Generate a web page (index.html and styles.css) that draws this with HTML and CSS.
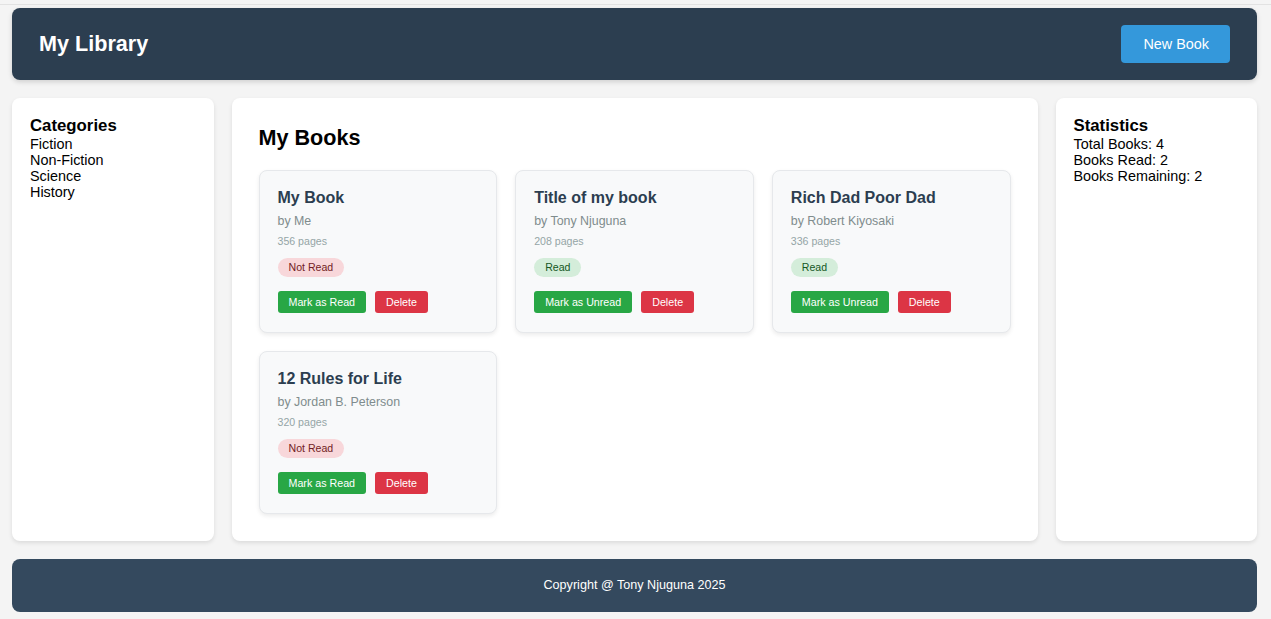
FILE: index.html
```html
<!DOCTYPE html>
<html lang="en">
<head>
<meta charset="utf-8">
<title>My Library</title>
<link rel="stylesheet" href="styles.css">
</head>
<body>
<header class="topbar">
  <h1 class="brand">My Library</h1>
  <button class="btn-new">New Book</button>
</header>
<main class="layout">
  <aside class="panel side">
    <h3 class="side-title">Categories</h3>
    <ul class="plain-list">
      <li>Fiction</li>
      <li>Non-Fiction</li>
      <li>Science</li>
      <li>History</li>
    </ul>
  </aside>
  <section class="panel books">
    <h2 class="books-title">My Books</h2>
    <div class="book-grid">
      <article class="book-card">
        <h4 class="book-title">My Book</h4>
        <p class="book-author">by Me</p>
        <p class="book-pages">356 pages</p>
        <span class="badge badge-unread">Not Read</span>
        <div class="book-actions">
          <button class="btn btn-green">Mark as Read</button>
          <button class="btn btn-red">Delete</button>
        </div>
      </article>
      <article class="book-card">
        <h4 class="book-title">Title of my book</h4>
        <p class="book-author">by Tony Njuguna</p>
        <p class="book-pages">208 pages</p>
        <span class="badge badge-read">Read</span>
        <div class="book-actions">
          <button class="btn btn-green">Mark as Unread</button>
          <button class="btn btn-red">Delete</button>
        </div>
      </article>
      <article class="book-card">
        <h4 class="book-title">Rich Dad Poor Dad</h4>
        <p class="book-author">by Robert Kiyosaki</p>
        <p class="book-pages">336 pages</p>
        <span class="badge badge-read">Read</span>
        <div class="book-actions">
          <button class="btn btn-green">Mark as Unread</button>
          <button class="btn btn-red">Delete</button>
        </div>
      </article>
      <article class="book-card">
        <h4 class="book-title">12 Rules for Life</h4>
        <p class="book-author">by Jordan B. Peterson</p>
        <p class="book-pages">320 pages</p>
        <span class="badge badge-unread">Not Read</span>
        <div class="book-actions">
          <button class="btn btn-green">Mark as Read</button>
          <button class="btn btn-red">Delete</button>
        </div>
      </article>
    </div>
  </section>
  <aside class="panel side">
    <h3 class="side-title">Statistics</h3>
    <ul class="plain-list">
      <li>Total Books: 4</li>
      <li>Books Read: 2</li>
      <li>Books Remaining: 2</li>
    </ul>
  </aside>
</main>
<footer class="footer">Copyright @ Tony Njuguna 2025</footer>
</body>
</html>
```
FILE: styles.css
```css
html {
  background: #f4f4f4;
}
body {
  margin: 4px 0 0;
  border-top: 1px solid #e2e2e2;
  padding: 3px 14px 0 12px;
  font-family: "Liberation Sans", Arial, sans-serif;
  font-size: 14.4px;
  color: #000;
}
.topbar {
  height: 72px;
  box-sizing: border-box;
  background: #2c3e50;
  border-radius: 8px;
  box-shadow: 0 2px 5px rgba(0, 0, 0, 0.15);
  display: flex;
  align-items: center;
  justify-content: space-between;
  padding: 0 27px;
}
.brand {
  margin: 0;
  font-size: 21.6px;
  font-weight: bold;
  color: #fff;
}
.btn-new {
  height: 38px;
  padding: 0 21px 0 22px;
  border: none;
  border-radius: 4px;
  background: #3498db;
  color: #fff;
  font-family: "Liberation Sans", Arial, sans-serif;
  font-size: 14.4px;
}
.layout {
  display: grid;
  grid-template-columns: 1fr 4fr 1fr;
  gap: 18px;
  margin: 18px 0;
}
.panel {
  background: #fff;
  border-radius: 8px;
  box-shadow: 0 2px 4px rgba(0, 0, 0, 0.1);
}
.side {
  padding: 18px;
  height: 443px;
  box-sizing: border-box;
}
.side-title {
  margin: 0;
  font-size: 16.8px;
  line-height: 20px;
}
.plain-list {
  list-style: none;
  margin: 0;
  padding: 0;
  font-size: 14.4px;
  line-height: 16px;
}
.books {
  padding: 27px 27px 27px;
}
.books-title {
  margin: 0 0 20px;
  font-size: 21.6px;
  line-height: 25px;
}
.book-grid {
  display: grid;
  grid-template-columns: repeat(3, 1fr);
  gap: 18px;
}
.book-card {
  background: #f8f9fa;
  border: 1px solid #e6e8eb;
  border-radius: 8px;
  box-shadow: 0 2px 4px rgba(0, 0, 0, 0.08);
  padding: 18px 18px 19px;
  display: flex;
  flex-direction: column;
  align-items: flex-start;
}
.book-title {
  margin: 0 0 7px;
  font-size: 16px;
  line-height: 18px;
  color: #2c3e50;
}
.book-author {
  margin: 0;
  font-size: 12.4px;
  line-height: 15px;
  color: #7f8c8d;
}
.book-pages {
  margin: 6px 0 11px;
  font-size: 10.6px;
  line-height: 12px;
  color: #95a5a6;
}
.badge {
  font-size: 10.6px;
  line-height: 13px;
  padding: 3px 11px;
  border-radius: 10px;
}
.badge-unread {
  background: #f8d7da;
  color: #721c24;
}
.badge-read {
  background: #d4edda;
  color: #155724;
}
.book-actions {
  display: flex;
  gap: 9px;
  margin-top: 14px;
}
.btn {
  border: none;
  border-radius: 3px;
  padding: 4px 11px;
  font-family: "Liberation Sans", Arial, sans-serif;
  font-size: 10.7px;
  line-height: 14px;
  color: #fff;
}
.btn-green {
  background: #28a745;
}
.btn-red {
  background: #dc3545;
}
.footer {
  background: #34495e;
  border-radius: 8px;
  color: #fff;
  text-align: center;
  font-size: 12.6px;
  line-height: 15px;
  padding: 19px 0;
}
```
